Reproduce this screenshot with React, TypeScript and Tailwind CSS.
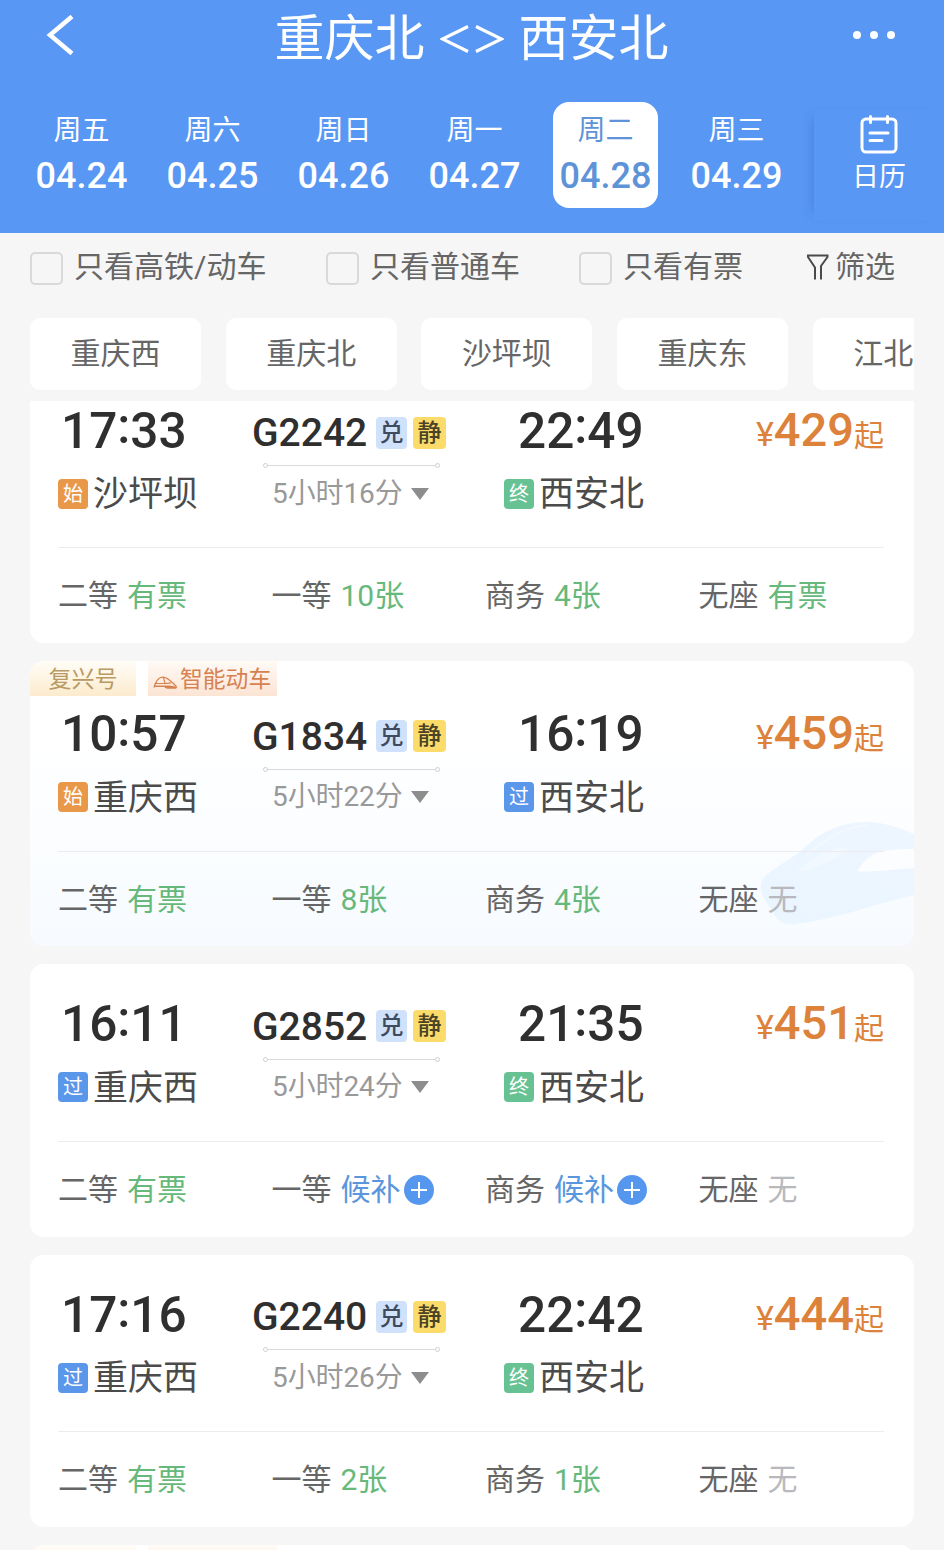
import React from "react";

type Seat = { name: string; value: string; kind: "ok" | "wait" | "none" };

type Train = {
  no: string;
  depart: string;
  arrive: string;
  from: string;
  fromTag: string;
  to: string;
  toTag: string;
  duration: string;
  price: string;
  smart?: boolean;
  seats: Seat[];
};

const days = [
  { week: "周五", date: "04.24" },
  { week: "周六", date: "04.25" },
  { week: "周日", date: "04.26" },
  { week: "周一", date: "04.27" },
  { week: "周二", date: "04.28", active: true },
  { week: "周三", date: "04.29" },
];

const stations = ["重庆西", "重庆北", "沙坪坝", "重庆东", "江北"];

const trains: Train[] = [
  {
    no: "G2242", depart: "17:33", arrive: "22:49", from: "沙坪坝", fromTag: "始", to: "西安北", toTag: "终", duration: "5小时16分", price: "429",
    seats: [
      { name: "二等", value: "有票", kind: "ok" },
      { name: "一等", value: "10张", kind: "ok" },
      { name: "商务", value: "4张", kind: "ok" },
      { name: "无座", value: "有票", kind: "ok" },
    ],
  },
  {
    no: "G1834", depart: "10:57", arrive: "16:19", from: "重庆西", fromTag: "始", to: "西安北", toTag: "过", duration: "5小时22分", price: "459", smart: true,
    seats: [
      { name: "二等", value: "有票", kind: "ok" },
      { name: "一等", value: "8张", kind: "ok" },
      { name: "商务", value: "4张", kind: "ok" },
      { name: "无座", value: "无", kind: "none" },
    ],
  },
  {
    no: "G2852", depart: "16:11", arrive: "21:35", from: "重庆西", fromTag: "过", to: "西安北", toTag: "终", duration: "5小时24分", price: "451",
    seats: [
      { name: "二等", value: "有票", kind: "ok" },
      { name: "一等", value: "候补", kind: "wait" },
      { name: "商务", value: "候补", kind: "wait" },
      { name: "无座", value: "无", kind: "none" },
    ],
  },
  {
    no: "G2240", depart: "17:16", arrive: "22:42", from: "重庆西", fromTag: "过", to: "西安北", toTag: "终", duration: "5小时26分", price: "444",
    seats: [
      { name: "二等", value: "有票", kind: "ok" },
      { name: "一等", value: "2张", kind: "ok" },
      { name: "商务", value: "1张", kind: "ok" },
      { name: "无座", value: "无", kind: "none" },
    ],
  },
];

const tagColors: Record<string, string> = {
  始: "bg-[#e9984a]",
  过: "bg-[#5a96ea]",
  终: "bg-[#67c293]",
};

const seatColors = {
  ok: "text-[#67b87b]",
  wait: "text-[#5a96dc]",
  none: "text-[#b9b9bd]",
};

function Time({ value }: { value: string }) {
  const [h, m] = value.split(":");
  return (
    <div className="flex h-14 pl-[3px] text-[49.5px] leading-[56px] font-medium text-[#2f2f2f] whitespace-nowrap">
      <span>{h}</span>
      <span className="-mt-[5px]">:</span>
      <span>{m}</span>
    </div>
  );
}

function Station({ tag, name }: { tag: string; name: string }) {
  return (
    <div className="mt-[15px] flex h-10 items-center whitespace-nowrap">
      <span className={`flex size-[30px] items-center justify-center rounded-[4px] text-[20px] leading-none text-white ${tagColors[tag]}`}>{tag}</span>
      <span className="mt-[3px] ml-[5px] text-[35px] leading-10 text-[#4b4b4b]">{name}</span>
    </div>
  );
}

function TrainTags() {
  return (
    <div className="flex h-[35px] gap-3">
      <span className="w-[106px] bg-gradient-to-b from-[#fffdf8] to-[#fcebcd] text-center text-[23px] leading-[37px] text-[#b99a64]">复兴号</span>
      <span className="flex w-[129px] items-center bg-gradient-to-b from-[#fffaf6] to-[#fce4d4] pl-[5px] text-[22.800px] leading-[37px] whitespace-nowrap text-[#d68250]">
        <svg className="mt-[8px] mr-[2px] h-[13px] w-[25px] shrink-0" viewBox="0 0 25 13" fill="none" stroke="currentColor" strokeWidth="1.200">
          <path d="M1 11.500C2.500 6 5.500 1.200 10 1.200c5 0 8 4.500 13.500 9.300M2.500 7.500h9.500M10.500 1.500l1.500 6 6-.7" />
          <path d="M1 9.500h12c4 0 7 .3 11.500 1.500L23 12.800H14L11 11H1z" fill="currentColor" stroke="none" />
        </svg>
        <span className="mt-[2px]">智能动车</span>
      </span>
    </div>
  );
}

function TrainWatermark() {
  return (
    <svg className="absolute top-[153px] right-0 h-[120px] w-[160px]" viewBox="0 0 160 120" fill="none">
      <defs>
        <linearGradient id="body" x1="0" y1="1" x2="1" y2="0">
          <stop offset="0" stopColor="#e9f5ff" />
          <stop offset="1" stopColor="#eef6ff" />
        </linearGradient>
      </defs>
      <path d="M8 66C20 52 38 46 50 34C68 17 88 8 112 8c18 0 34 6 48 12v61C120 90 80 106 40 110 25 111 22 104 18 96 10 86 4 76 8 66z" fill="url(#body)" />
      <path d="M160 35c-14 0-30 0-40 5-8 4-12 10-17 17 15 2 37-2 57-3z" fill="#fbfdff" />
      <path d="M42 58C54 48 66 38 84 34l12-1C84 46 62 55 42 58z" fill="#f1f8ff" />
      <path d="M52 42C74 22 92 13 114 11" stroke="#f4f9ff" strokeWidth="1.500" />
    </svg>
  );
}

function PlusIcon() {
  return (
    <svg className="ml-[3px] size-[30px]" viewBox="0 0 30 30">
      <circle cx="15" cy="15" r="15" fill="#5597ee" />
      <path d="M7 15h16M15 7v16" stroke="#fff" strokeWidth="2" />
    </svg>
  );
}

function TrainCard({ train }: { train: Train }) {
  return (
    <div className={`relative shrink-0 overflow-hidden rounded-[14px] ${train.smart ? "h-[285px] bg-gradient-to-b from-white from-25% to-[#f7fbff]" : "h-[272.5px] bg-white pt-8"}`}>
      {train.smart && <TrainWatermark />}
      {train.smart && <TrainTags />}
      <div className={`relative pr-[30px] pl-7 ${train.smart ? "pt-2.5" : ""}`}>
        <div className="flex h-[145.500px] border-b-[1.500px] border-[#ececee]">
          <div className="w-[194px]">
            <Time value={train.depart} />
            <Station tag={train.fromTag} name={train.from} />
          </div>
          <div className="w-[252px]">
            <div className="mt-[14px] flex h-8 items-center">
              <span className="mt-[1px] w-[124px] text-[39px] leading-8 font-medium text-[#2f2f2f]">{train.no}</span>
              <span className="flex h-8 w-[31px] items-center justify-center rounded-[4px] bg-[#d0e1fc] text-[24px] leading-none font-medium text-[#3f4a5c]">兑</span>
              <span className="ml-1.5 flex h-8 w-[33px] items-center justify-center rounded-[4px] bg-[#fbdc6b] text-[24px] leading-none font-medium text-[#4a4326]">静</span>
            </div>
            <div className="mt-[14px] ml-[11px] flex h-1.5 w-[177px] items-center">
              <span className="size-[5px] rounded-full border border-[#cfcfcf]" />
              <span className="h-px flex-1 bg-[#d9d9d9]" />
              <span className="size-[5px] rounded-full border border-[#cfcfcf]" />
            </div>
            <div className="mt-[7px] ml-5 flex h-9 items-center text-[28px] leading-9 tracking-[-0.1px] text-[#999]">
              {train.duration}
              <svg className="ml-[8px] h-3 w-[18px]" viewBox="0 0 18 12" fill="#8d8d8d">
                <path d="M0 0h18L9 12z" />
              </svg>
            </div>
          </div>
          <div className="flex-1">
            <div className="pl-[11px]">
              <Time value={train.arrive} />
            </div>
            <Station tag={train.toTag} name={train.to} />
          </div>
          <div className="-mt-[1px] flex h-14 items-baseline leading-[56px] text-[#dd823b]">
            <span className="text-[34px]">¥</span>
            <span className="text-[47px] font-medium">{train.price}</span>
            <span className="text-[30px]">起</span>
          </div>
        </div>
        <div className="flex pt-[28px]">
          {train.seats.map((s) => (
            <div key={s.name} className="flex h-10 w-[213.500px] shrink-0 items-center text-[30px] leading-10">
              <span className="text-[#666]">{s.name}</span>
              <span className={`ml-[9px] ${seatColors[s.kind]}`}>{s.value}</span>
              {s.kind === "wait" && <PlusIcon />}
            </div>
          ))}
        </div>
      </div>
    </div>
  );
}

function CheckOption({ label, className }: { label: string; className: string }) {
  return (
    <label className={`flex items-center ${className}`}>
      <span className="mt-[3px] size-[33px] rounded-[5px] border-2 border-[#d9d9d9]" />
      <span className="ml-[11px] whitespace-nowrap">{label}</span>
    </label>
  );
}

export default function App() {
  return (
    <div className="flex h-[1550px] w-[944px] flex-col overflow-hidden bg-[#f6f6f6] font-[Roboto,'Noto_Sans_CJK_SC',sans-serif]">
      {/* Header */}
      <header className="h-[233px] shrink-0 bg-[#5897f4] text-white">
        <div className="flex h-[74px] items-center justify-between pr-12 pb-1 pl-[46px]">
          <svg className="h-10 w-[30px]" viewBox="0 0 30 40" fill="none" stroke="currentColor" strokeWidth="4.500">
            <path d="M26 1.500L4 20l22 18.500" />
          </svg>
          <h1 className="mt-[7px] ml-[14px] flex items-center text-[50px] leading-[70px]">
            重庆北
            <svg className="mx-[15px] h-[28px] w-[64px]" viewBox="0 0 64 28" fill="none" stroke="currentColor" strokeWidth="3.300">
              <path d="M28 1.500L2.500 14 28 26.500M36 1.500L61.500 14 36 26.500" />
            </svg>
            西安北
          </h1>
          <div className="flex gap-[9px] pr-[1px]">
            <span className="size-[8px] rounded-full bg-white" />
            <span className="size-[8px] rounded-full bg-white" />
            <span className="size-[8px] rounded-full bg-white" />
          </div>
        </div>

        <div className="mt-7 flex h-[118px]">
          <div className="flex w-[814px] shrink-0 pl-4">
            {days.map((d) => (
              <div key={d.date} className="flex w-[131px] shrink-0 justify-center">
                <div className={`h-[106px] w-[105px] rounded-2xl text-center ${d.active ? "bg-white text-[#5f93d8]" : ""}`}>
                  <div className="h-[53px] text-[28px] leading-[57px]">{d.week}</div>
                  <div className="text-[36px] leading-[42px] font-medium">{d.date}</div>
                </div>
              </div>
            ))}
          </div>
          <div className="mt-2 flex h-[110px] flex-1 flex-col items-center bg-[#5897f4] pt-[5px] shadow-[-9px_0_10px_-8px_rgba(50,100,190,0.4)]">
            <svg className="h-[39px] w-[38px]" viewBox="0 0 38 39" fill="none" stroke="currentColor" strokeWidth="3" strokeLinecap="round">
              <rect x="2" y="4" width="34" height="33" rx="4" />
              <path d="M10.500 1.500v6M27.500 1.500v6M10 18h18M10 25.500h12" />
            </svg>
            <span className="mt-[3px] text-[27px] leading-[40px]">日历</span>
          </div>
        </div>
      </header>

      {/* Filters */}
      <div className="flex h-[85px] shrink-0 items-start pt-[13px] pl-[30px] text-[30px] leading-[42px] text-[#666]">
        <CheckOption label="只看高铁/动车" className="w-[296px]" />
        <CheckOption label="只看普通车" className="w-[253px]" />
        <CheckOption label="只看有票" className="w-[227px]" />
        <div className="flex items-center whitespace-nowrap">
          <svg className="h-[26px] w-[24px]" viewBox="0 0 24 26" fill="none" stroke="#4a4a4a" strokeWidth="2">
            <path d="M9 25.500V13.500L2 3V1.500h19.500V3L15 12v13.500" />
          </svg>
          <span className="ml-[5px]">筛选</span>
        </div>
      </div>

      {/* Stations */}
      <div className="mx-[30px] flex h-[83px] shrink-0 gap-[24.700px] overflow-hidden">
        {stations.map((s) => (
          <button key={s} className="h-[72px] shrink-0 rounded-[10px] bg-white px-[40.500px] text-[30px] leading-[72px] whitespace-nowrap text-[#666]">
            {s}
          </button>
        ))}
      </div>

      {/* Train list, scrolled a little under the station bar */}
      <div className="mx-[30px] flex-1 overflow-hidden">
        <div className="-mt-[30.500px] flex flex-col gap-[18px]">
          {trains.map((t) => (
            <TrainCard key={t.no} train={t} />
          ))}
          <div className="h-[285px] shrink-0 overflow-hidden rounded-[14px] bg-white">
            <TrainTags />
          </div>
        </div>
      </div>
    </div>
  );
}
